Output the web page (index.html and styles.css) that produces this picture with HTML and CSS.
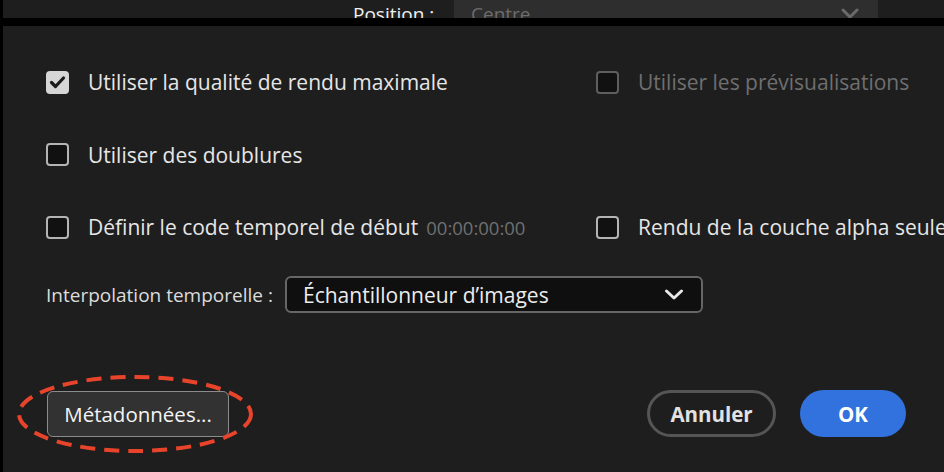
FILE: index.html
```html
<!DOCTYPE html>
<html lang="fr">
<head>
    <meta charset="UTF-8">
    <meta name="viewport" content="width=device-width, initial-scale=1.0">
    <link rel="stylesheet" href="styles.css">
    <title>Réglages d'exportation</title>
</head>
<body>

<div class="top-strip">
    <span class="top-label">Position :</span>
    <div class="top-select">
        <span>Centre</span>
        <svg class="chevron" width="20" height="12" viewBox="0 0 20 12"><path d="M3 2 L10 9 L17 2" fill="none" stroke="#6a6a6a" stroke-width="3" stroke-linecap="round" stroke-linejoin="round"/></svg>
    </div>
</div>

<div class="panel">
    <div class="options">
        <label class="option">
            <span class="box checked">
                <svg width="23" height="23" viewBox="0 0 23 23"><path d="M5.5 11.5 L9.5 15.5 L17.5 7" fill="none" stroke="#1b1b1b" stroke-width="3.2" stroke-linecap="round" stroke-linejoin="round"/></svg>
            </span>
            <span class="text">Utiliser la qualité de rendu maximale</span>
        </label>
        <label class="option disabled">
            <span class="box"></span>
            <span class="text">Utiliser les prévisualisations</span>
        </label>
        <label class="option">
            <span class="box"></span>
            <span class="text">Utiliser des doublures</span>
        </label>
        <div></div>
        <label class="option">
            <span class="box"></span>
            <span class="text">Définir le code temporel de début</span>
            <span class="timecode">00:00:00:00</span>
        </label>
        <label class="option">
            <span class="box"></span>
            <span class="text">Rendu de la couche alpha seule</span>
        </label>
    </div>

    <div class="interp">
        <span class="interp-label">Interpolation temporelle :</span>
        <div class="select">
            <span>Échantillonneur d’images</span>
            <svg width="20" height="12" viewBox="0 0 20 12"><path d="M2.5 2 L10 9 L17.5 2" fill="none" stroke="#e8e8e8" stroke-width="3" stroke-linecap="round" stroke-linejoin="round"/></svg>
        </div>
    </div>

    <div class="footer">
        <span class="meta-wrap">
            <button class="btn-meta">Métadonnées...</button>
            <svg class="highlight" width="240" height="82" viewBox="0 0 240 82"><ellipse cx="120" cy="41" rx="116" ry="37" fill="none" stroke="#e8442b" stroke-width="4" stroke-dasharray="15 9"/></svg>
        </span>
        <div class="actions">
            <button class="btn-cancel">Annuler</button>
            <button class="btn-ok">OK</button>
        </div>
    </div>
</div>

</body>
</html>
```

FILE: styles.css
```css
body {
    margin: 0;
    background: #000;
    height: 472px;
    overflow: hidden;
    font-family: "Open Sans", Lato, sans-serif;
    color: #e6e6e6;
}

.top-strip {
    margin-left: 3px;
    height: 18px;
    background: #1e1e1e;
    display: flex;
    overflow: hidden;
}

.top-label {
    margin-left: 350px;
    width: 101px;
    padding-top: 2px;
    font-size: 19px;
    line-height: 24px;
    color: #f0f0f0;
}

.top-select {
    width: 424px;
    background: #2e2e2e;
    display: flex;
    justify-content: space-between;
    padding: 2px 18px 0 17px;
    box-sizing: border-box;
    font-size: 19px;
    line-height: 24px;
    color: #6c6c6c;
}

.top-select .chevron {
    margin-top: 6px;
}

.panel {
    margin: 8px 0 0 3px;
    height: 446px;
    background: #1e1e1e;
    box-sizing: border-box;
    padding: 44px 38px 0 43px;
}

.options {
    display: grid;
    grid-template-columns: 550px 1fr;
    grid-auto-rows: 24px;
    row-gap: 48.5px;
}

.option {
    display: flex;
    align-items: center;
    white-space: nowrap;
    font-size: 21px;
}

.box {
    width: 23px;
    height: 23px;
    box-sizing: border-box;
    border: 2.5px solid #b4b4b4;
    border-radius: 4px;
    background: #111;
    margin-right: 19px;
    flex-shrink: 0;
}

.box.checked {
    border: none;
    background: #d6d6d6;
}

.option.disabled .box {
    border-color: #5e5e5e;
}

.option.disabled .text {
    color: #6f6f6f;
}

.timecode {
    margin-left: 8px;
    font-size: 18.5px;
    color: #707070;
}

.interp {
    margin-top: 37px;
    display: flex;
    align-items: center;
}

.interp-label {
    font-size: 19px;
    color: #dcdcdc;
    width: 239px;
}

.select {
    width: 418px;
    height: 37px;
    box-sizing: border-box;
    border: 2px solid #666;
    border-radius: 6px;
    background: #0f0f0f;
    display: flex;
    align-items: center;
    justify-content: space-between;
    padding: 0 17px 0 16px;
    font-size: 21px;
    color: #ececec;
}

.footer {
    margin-top: 77px;
    display: flex;
    justify-content: space-between;
    align-items: center;
}

.meta-wrap {
    position: relative;
    margin-left: 1px;
}

.btn-meta {
    width: 182px;
    height: 46px;
    padding: 0;
    background: #323232;
    border: 1.5px solid #8c8c8c;
    border-radius: 6px;
    font-family: inherit;
    font-size: 20.5px;
    color: #f4f4f4;
}

.highlight {
    position: absolute;
    left: -32px;
    top: -18px;
}

.actions {
    display: flex;
    gap: 24px;
}

.actions button {
    height: 47px;
    padding: 0;
    border-radius: 24px;
    font-family: inherit;
    font-size: 20.5px;
    font-weight: bold;
}

.btn-cancel {
    width: 129px;
    background: transparent;
    border: 3px solid #555;
    color: #e2e2e2;
}

.btn-ok {
    width: 106px;
    background: #3272df;
    border: none;
    color: #fff;
}
```
